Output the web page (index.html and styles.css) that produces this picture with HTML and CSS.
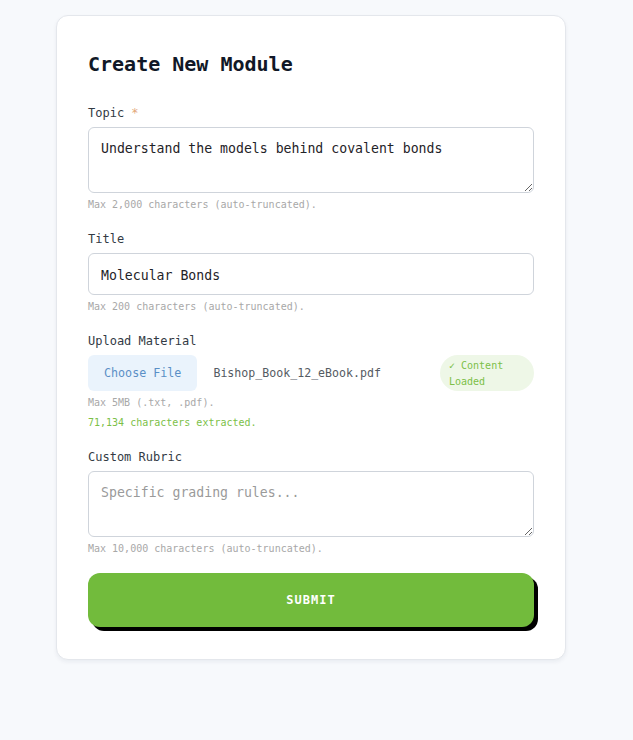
FILE: index.html
```html
<!DOCTYPE html>
<html lang="en">
<head>
<meta charset="utf-8">
<title>Create New Module</title>
<link rel="stylesheet" href="styles.css">
</head>
<body>
<div class="card">
  <h2 class="title">Create New Module</h2>
  <form class="form">
    <div class="field">
      <label class="label">Topic <span class="req">*</span></label>
      <textarea class="control area">Understand the models behind covalent bonds</textarea>
      <div class="hint">Max 2,000 characters (auto-truncated).</div>
    </div>
    <div class="field">
      <label class="label">Title</label>
      <input class="control line" type="text" value="Molecular Bonds">
      <div class="hint">Max 200 characters (auto-truncated).</div>
    </div>
    <div class="field">
      <label class="label">Upload Material</label>
      <div class="upload">
        <span class="choose">Choose File</span>
        <span class="filename">Bishop_Book_12_eBook.pdf</span>
        <span class="badge">✓ Content Loaded</span>
      </div>
      <div class="hint">Max 5MB (.txt, .pdf).</div>
      <div class="hint success">71,134 characters extracted.</div>
    </div>
    <div class="field last">
      <label class="label">Custom Rubric</label>
      <textarea class="control area" placeholder="Specific grading rules..."></textarea>
      <div class="hint">Max 10,000 characters (auto-truncated).</div>
    </div>
    <button class="submit" type="button">SUBMIT</button>
  </form>
</div>
</body>
</html>
```
FILE: styles.css
```css
* { box-sizing: border-box; }
html, body { margin: 0; padding: 0; }
body {
  background: #f7f9fc;
  font-family: "DejaVu Sans Mono", "Liberation Mono", monospace;
  padding: 15px 0 0 56px;
  min-height: 740px;
}
.card {
  width: 510px;
  background: #ffffff;
  border: 1px solid #e4e7ec;
  border-radius: 12px;
  box-shadow: 0 2px 4px rgba(20, 30, 60, 0.06);
  padding: 36px 31px 32px;
}
.title {
  margin: 0 0 28px;
  font-size: 20px;
  line-height: 24px;
  font-weight: bold;
  color: #111827;
}
.form { display: flex; flex-direction: column; }
.field { display: flex; flex-direction: column; margin-bottom: 18px; }
.field.last { margin-bottom: 17px; }
.label {
  font-size: 12px;
  line-height: 18px;
  color: #333a44;
  margin-bottom: 5px;
}
.req { color: #e3a77a; }
.control {
  font-family: inherit;
  font-size: 13.2px;
  line-height: 16px;
  color: #1f2328;
  border: 1px solid #cfd4db;
  border-radius: 6px;
  padding: 13px 12px 11px;
  background: #fff;
  width: 100%;
  margin: 0;
  outline: none;
}
.control::placeholder { color: #9a9a9a; }
.area { height: 66px; resize: vertical; display: block; }
.line { height: 42px; display: block; }
.hint {
  font-size: 10px;
  line-height: 15px;
  color: #a8a8a8;
  margin-top: 4px;
}
.hint.success { color: #7cbf48; margin-top: 5px; }
.upload { display: flex; align-items: center; }
.choose {
  height: 36px;
  padding: 0 16px;
  display: flex;
  align-items: center;
  background: #eaf3fc;
  color: #5a8fc6;
  border-radius: 6px;
  font-size: 11.7px;
}
.filename {
  flex: 1;
  margin-left: 16px;
  font-size: 11.6px;
  color: #555b63;
}
.badge {
  width: 94px;
  height: 36px;
  border-radius: 18px;
  background: #eef7e7;
  color: #7cbf48;
  font-size: 10px;
  line-height: 16px;
  padding: 3px 9px 1px;
}
.submit {
  height: 54px;
  width: 100%;
  border: none;
  border-radius: 12px;
  background: #72bb3c;
  box-shadow: 4px 4px 0 #000;
  color: #fff;
  font-family: inherit;
  font-size: 12px;
  font-weight: bold;
  letter-spacing: 1px;
  cursor: pointer;
}
```
